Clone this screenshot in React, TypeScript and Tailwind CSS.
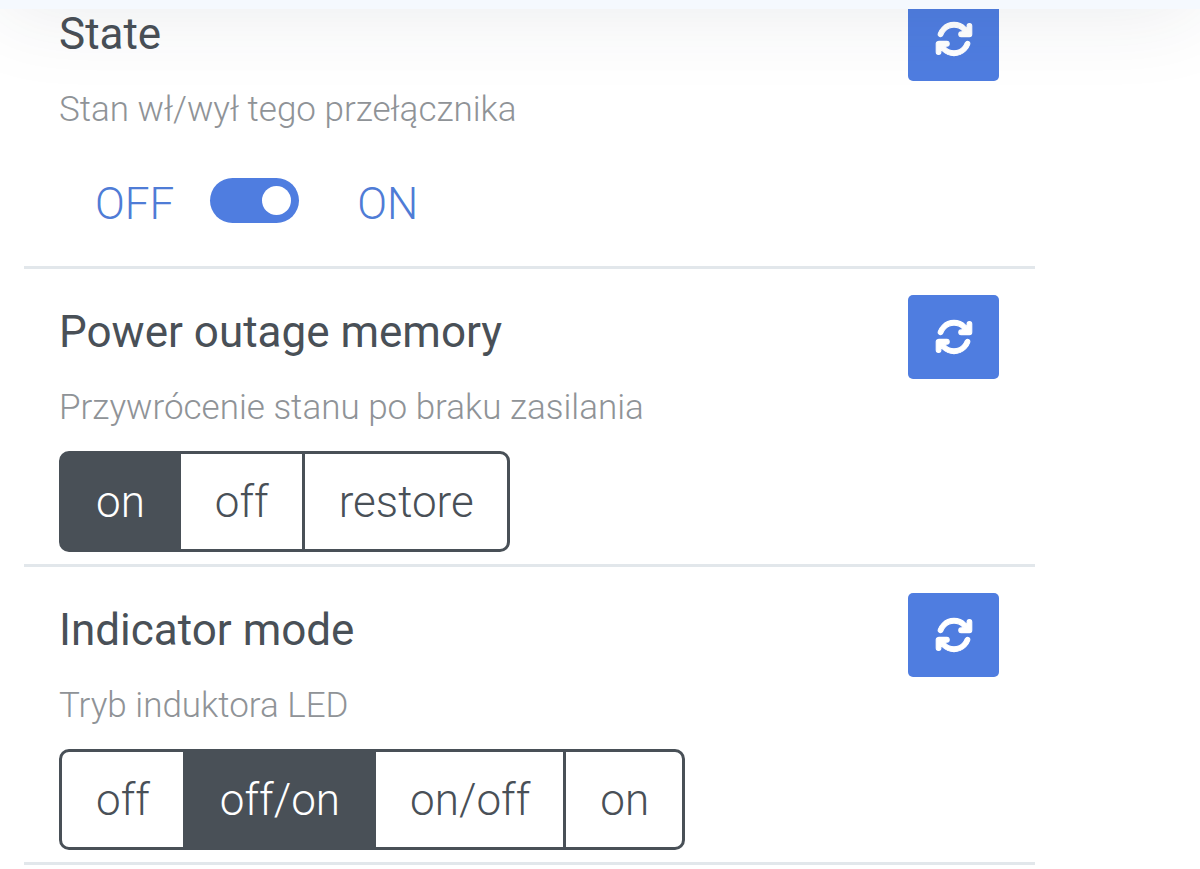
import { useState } from 'react';
import clsx from 'clsx';
import { FaArrowsRotate } from 'react-icons/fa6';

type Feature = {
  id: string;
  title: string;
  description: string;
  options?: string[];
  value: string;
};

const features: Feature[] = [
  {
    id: 'state',
    title: 'State',
    description: 'Stan wł/wył tego przełącznika',
    value: 'ON',
  },
  {
    id: 'power_outage_memory',
    title: 'Power outage memory',
    description: 'Przywrócenie stanu po braku zasilania',
    options: ['on', 'off', 'restore'],
    value: 'on',
  },
  {
    id: 'indicator_mode',
    title: 'Indicator mode',
    description: 'Tryb induktora LED',
    options: ['off', 'off/on', 'on/off', 'on'],
    value: 'off/on',
  },
];

type ControlProps = {
  feature: Feature;
  value: string;
  onChange: (value: string) => void;
};

function Toggle({ feature, value, onChange }: ControlProps) {
  return (
    <div className="flex h-[101px] items-center pl-9 text-[44px] font-light text-[#4f7cd6]">
      <button type="button" className="cursor-pointer" onClick={() => onChange('OFF')}>
        OFF
      </button>
      <input
        id={feature.id}
        type="checkbox"
        aria-label={feature.title}
        checked={value === 'ON'}
        onChange={(e) => onChange(e.target.checked ? 'ON' : 'OFF')}
        className="mr-[58px] mb-1.5 ml-9 flex h-[45px] w-[89px] cursor-pointer appearance-none items-center rounded-full bg-gray-300 px-2 before:size-[29px] before:rounded-full before:bg-white checked:justify-end checked:bg-[#4f7de0]"
      />
      <button type="button" className="cursor-pointer" onClick={() => onChange('ON')}>
        ON
      </button>
    </div>
  );
}

function ButtonGroup({ feature, value, onChange }: ControlProps) {
  return (
    <div role="group" aria-label={feature.title} className="flex h-[101px]">
      {feature.options?.map((option) => (
        <button
          key={option}
          type="button"
          aria-pressed={option === value}
          onClick={() => onChange(option)}
          className={clsx(
            '-ml-[3px] cursor-pointer border-[3px] border-[#495057] pr-[33px] pl-[34px] text-[44px] font-light first:ml-0 first:rounded-l-[10px] last:rounded-r-[10px]',
            option === value ? 'bg-[#495057] text-white' : 'bg-white text-[#495057]'
          )}
        >
          {option}
        </button>
      ))}
    </div>
  );
}

function FeatureRow({ feature }: { feature: Feature }) {
  const [value, setValue] = useState(feature.value);
  const Control = feature.options ? ButtonGroup : Toggle;

  return (
    <li className="border-b-[3px] border-[#e2e7eb] pt-[26px] pr-9 pb-3 pl-[35px]">
      <div className="flex items-start justify-between">
        <div>
          <h2 className="text-[44px] leading-[74px] font-normal text-[#495057]">{feature.title}</h2>
          <p className="mt-3 text-[35px] leading-[54px] font-light text-[#8f9397]">{feature.description}</p>
        </div>
        <button
          type="button"
          aria-label={`Refresh ${feature.title}`}
          className="flex h-[84px] w-[91px] shrink-0 cursor-pointer items-center justify-center rounded-[5px] bg-[#4f7de0] text-white"
        >
          <FaArrowsRotate size={38} className="stroke-current stroke-[14px]" />
        </button>
      </div>
      <div className="mt-4">
        <Control feature={feature} value={value} onChange={setValue} />
      </div>
    </li>
  );
}

export default function App() {
  return (
    <div className="flex min-h-screen flex-col overflow-x-hidden bg-white font-['Roboto',sans-serif]">
      <header className="relative z-10 -mt-[191px] h-[200px] bg-[#f5f9fe] shadow-[0_0_88px_rgba(41,48,66,0.1)]" />
      <main className="-mt-[38px] pr-10 pl-6">
        <ul className="w-full max-w-[1011px]">
          {features.map((feature) => (
            <FeatureRow key={feature.id} feature={feature} />
          ))}
        </ul>
      </main>
    </div>
  );
}
